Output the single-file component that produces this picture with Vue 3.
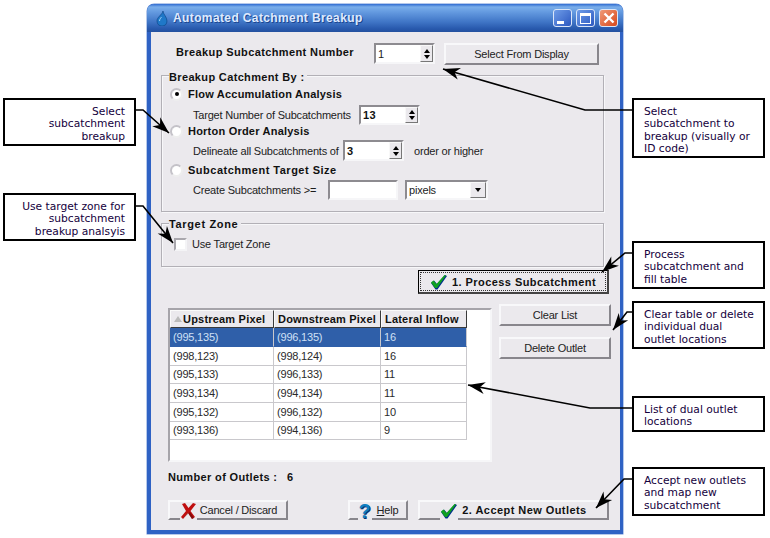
<script setup>
const rows = [
  ['(995,135)', '(996,135)', '16'],
  ['(998,123)', '(998,124)', '16'],
  ['(995,133)', '(996,133)', '11'],
  ['(993,134)', '(994,134)', '11'],
  ['(995,132)', '(996,132)', '10'],
  ['(993,136)', '(994,136)', '9'],
]
const leftNotes = [
  { lines: ['Select', 'subcatchment', 'breakup'], cls: 'n1' },
  { lines: ['Use target zone for', 'subcatchment', 'breakup analsyis'], cls: 'n2' },
]
const rightNotes = [
  { lines: ['Select', 'subcatchment to', 'breakup (visually or', 'ID code)'], cls: 'r1' },
  { lines: ['Process', 'subcatchment and', 'fill table'], cls: 'r2' },
  { lines: ['Clear table or delete', 'individual dual', 'outlet locations'], cls: 'r3' },
  { lines: ['List of dual outlet', 'locations'], cls: 'r4' },
  { lines: ['Accept new outlets', 'and map new', 'subcatchment'], cls: 'r5' },
]
const arrowData = [
  [[135, 110], [143, 110], [169, 133]],
  [[134, 206], [143, 206], [173, 243]],
  [[633, 110], [585, 110], [443, 69]],
  [[633, 253], [625, 253], [602, 272]],
  [[633, 312], [627, 312], [613, 330]],
  [[633, 408], [590, 408], [468, 385]],
  [[633, 479], [624, 479], [596, 508]],
]
function head(pts) {
  const [a, b] = pts.slice(-2)
  const d = Math.hypot(b[0] - a[0], b[1] - a[1])
  const ux = (b[0] - a[0]) / d
  const uy = (b[1] - a[1]) / d
  const at = (back, side) => `${b[0] - ux * back - uy * side},${b[1] - uy * back + ux * side}`
  return [at(0, 0), at(17, 6), at(12, 0), at(17, -6)].join(' ')
}
const arrows = arrowData.map((pts) => ({
  line: pts.map((p) => p.join(',')).join(' '),
  head: head(pts),
}))
</script>

<template>
  <div class="page">
    <aside class="notes left">
      <div v-for="n in leftNotes" :key="n.cls" class="note" :class="n.cls">
        <div v-for="l in n.lines" :key="l">{{ l }}</div>
      </div>
    </aside>

    <main class="window">
      <header class="titlebar">
        <svg class="drop" width="12" height="15" viewBox="0 0 12 15">
          <path d="M7 0C7 3 11 6 11 10C11 13 9 15 6 15C3 15 1 13 1 10C1 6 6 4 7 0Z" fill="#1f78c8" stroke="#0b3f80" stroke-width=".6" />
          <path d="M3.5 10C3.5 8 5 7 5.5 6" stroke="#9fd4f5" fill="none" />
        </svg>
        <span class="title">Automated Catchment Breakup</span>
        <div class="winbtns">
          <div class="wb"><span class="min"></span></div>
          <div class="wb"><span class="max"></span></div>
          <div class="wb close">
            <svg width="12" height="12" viewBox="0 0 12 12"><path d="M1.5 1.5L10.5 10.5M10.5 1.5L1.5 10.5" stroke="#fff" stroke-width="2.4" /></svg>
          </div>
        </div>
      </header>

      <section class="client">
        <div class="row1">
          <label class="bold r1label">Breakup Subcatchment Number</label>
          <div class="field w61 h21">
            <span class="val">1</span>
            <div class="spin"><i class="up"></i><i class="dn"></i></div>
          </div>
          <button class="btn sfd">Select From Display</button>
        </div>

        <div class="group g1">
          <div class="legend bold">Breakup Catchment By :</div>
          <div class="opt h18"><span class="radio on"></span><span class="bold ls23">Flow Accumulation Analysis</span></div>
          <div class="sub h20 mt2">
            <span class="sublabel w166">Target Number of Subcatchments</span>
            <div class="field w61 h20"><span class="val bold">13</span><div class="spin"><i class="up"></i><i class="dn"></i></div></div>
          </div>
          <div class="opt h12"><span class="radio"></span><span class="bold ls23">Horton Order Analysis</span></div>
          <div class="sub h21 mt3">
            <span class="sublabel w150">Delineate all Subcatchments of</span>
            <div class="field w61 h21"><span class="val bold">3</span><div class="spin"><i class="up"></i><i class="dn"></i></div></div>
            <span class="sublabel ooh">order or higher</span>
          </div>
          <div class="opt h18"><span class="radio"></span><span class="bold ls50">Subcatchment Target Size</span></div>
          <div class="sub h20 mt1">
            <span class="sublabel w135">Create Subcatchments &gt;=</span>
            <div class="field w70 h20"></div>
            <div class="field w83 h20 sel"><span class="val">pixels</span><div class="drop-btn"><i class="dn"></i></div></div>
          </div>
        </div>

        <div class="group g2">
          <div class="legend bold ls60">Target Zone</div>
          <div class="check"><span class="box"></span><span class="sublabel up1">Use Target Zone</span></div>
        </div>

        <button class="btn act process">
          <span class="focus">
            <svg width="18" height="16" viewBox="0 0 18 16"><path d="M1 9L4 6.5L7 10L15 1L17 2L7.5 15.5H5.5Z" fill="#00308c" /><path d="M1 8.5L3.5 6.5L6.5 10L14.5 1L16 1.5L7 14H5Z" fill="#0fa020" /></svg>
            <span class="bold lbl">1. Process Subcatchment</span>
          </span>
        </button>

        <div class="lower">
          <div class="grid">
            <div class="tr head">
              <div class="th"><i class="sort"></i>Upstream Pixel</div>
              <div class="th">Downstream Pixel</div>
              <div class="th">Lateral Inflow</div>
            </div>
            <div v-for="(r, i) in rows" :key="i" class="tr body" :class="{ selected: i === 0 }">
              <div v-for="c in r" :key="c" class="td">{{ c }}</div>
            </div>
          </div>
          <div class="side">
            <button class="btn sidebtn">Clear List</button>
            <button class="btn sidebtn">Delete Outlet</button>
          </div>
        </div>

        <div class="count bold"><span class="cl">Number of Outlets :</span><span>6</span></div>

        <div class="bottom">
          <button class="btn cancel">
            <span class="ic">
              <svg width="17" height="16" viewBox="0 0 17 16"><path d="M2 1L5 0L8.5 5L13 0L16 1L10.5 8L15 14L12 16L8 10L3 16L1 14L6 8Z" fill="#c01010" /><path d="M3 15.5L8 10L12 16L14 15L10 9" fill="#600808" opacity=".6" /></svg>
            </span>
            <span>Cancel / Discard</span>
          </button>
          <button class="btn help">
            <span class="ic q">?</span>
            <span class="helptxt"><u>H</u>elp</span>
          </button>
          <button class="btn accept">
            <span class="ic">
              <svg width="18" height="16" viewBox="0 0 18 16"><path d="M1 9L4 6.5L7 10L15 1L17 2L7.5 15.5H5.5Z" fill="#00308c" /><path d="M1 8.5L3.5 6.5L6.5 10L14.5 1L16 1.5L7 14H5Z" fill="#0fa020" /></svg>
            </span>
            <span class="bold lbl">2. Accept New Outlets</span>
          </button>
        </div>
      </section>
    </main>

    <aside class="notes right">
      <div v-for="n in rightNotes" :key="n.cls" class="note" :class="n.cls">
        <div v-for="l in n.lines" :key="l">{{ l }}</div>
      </div>
    </aside>

    <svg class="arrows" width="770" height="538" viewBox="0 0 770 538">
      <g v-for="(a, i) in arrows" :key="i">
        <polyline :points="a.line" fill="none" stroke="#000" stroke-width="1.6" />
        <polygon :points="a.head" fill="#000" />
      </g>
    </svg>
  </div>
</template>

<style>
html, body { margin: 0; background: #fff; }
</style>

<style scoped>
.page {
  position: relative;
  display: flex;
  width: 770px;
  height: 538px;
  overflow: hidden;
  background: #fff;
  font: 11px "Liberation Sans", Arial, sans-serif;
  letter-spacing: -.2px;
  color: #1c1c1c;
  white-space: nowrap;
}
.notes { width: 147px; flex: none; display: flex; flex-direction: column; }
.left { padding: 98px 0 0 3px; box-sizing: border-box; }
.right { padding: 98px 0 0 9px; box-sizing: border-box; }
.note {
  box-sizing: border-box;
  border: 2px solid #000;
  background: #fff;
  font: 10.7px/12.4px "DejaVu Sans", Verdana, sans-serif;
  letter-spacing: 0;
  color: #14003c;
  width: 133px;
}
.left .note { text-align: right; padding: 6px 9px 0 0; }
.right .note { padding: 6px 0 0 10px; }
.n1 { height: 48px; }
.n2 { height: 48px; margin-top: 47px; }
.r1 { height: 60px; }
.r2 { height: 48px; margin-top: 83px; }
.r3 { height: 48px; margin-top: 12px; }
.r4 { height: 36px; margin-top: 47px; }
.r5 { height: 49px; margin-top: 35px; }

.window {
  width: 476px;
  height: 530px;
  margin-top: 4px;
  flex: none;
  box-sizing: border-box;
  border: solid #2f62c4;
  border-width: 0 3px 4px 4px;
  border-radius: 7px 7px 0 0;
  background: #ebe9ed;
  display: flex;
  flex-direction: column;
  box-shadow: 0 0 0 .5px #6f93d8;
}
.titlebar {
  height: 28px;
  flex: none;
  margin: 0 -3px 0 -4px;
  border-radius: 7px 7px 0 0;
  background: linear-gradient(#2f6bd0 0, #7aaeea 3px, #649ae0 8px, #3f75c6 18px, #2758ac 25px, #24519f 28px);
  display: flex;
  align-items: center;
  padding: 0 5px 0 9px;
}
.drop { flex: none; margin-right: 5px; }
.title {
  font-weight: 700;
  font-size: 12px;
  letter-spacing: .38px;
  color: #dfeaff;
  text-shadow: 1px 1px 0 #1c4690;
  flex: 1;
}
.winbtns { display: flex; gap: 4px; }
.wb {
  box-sizing: border-box;
  width: 19px;
  height: 18px;
  border: 1px solid #dbe6f8;
  border-radius: 3px;
  background: linear-gradient(135deg, #6f9de8, #2c58c0);
  position: relative;
  display: flex;
  align-items: center;
  justify-content: center;
}
.wb.close { background: linear-gradient(135deg, #f09a78, #d8481c); }
.min { position: absolute; left: 3px; bottom: 2px; width: 7px; height: 3px; background: #fff; }
.max { width: 9px; height: 7px; border: 1px solid #fff; border-top-width: 3px; }

.client { display: flex; flex-direction: column; }
.bold { font-weight: 700; color: #111; letter-spacing: .35px; }
.bold.ls23 { letter-spacing: .22px; }
.bold.ls50 { letter-spacing: .5px; }
.bold.ls60 { letter-spacing: .65px; }

.row1 { display: flex; align-items: flex-start; height: 22px; margin-top: 11px; padding-left: 25px; }
.r1label { width: 198px; line-height: 18px; letter-spacing: .39px; }
.row1 .sfd { width: 155px; height: 22px; margin-left: 9px; }

.field {
  box-sizing: border-box;
  position: relative;
  flex: none;
  background: #fff;
  border: 2px solid;
  border-color: #8d8b90 #f6f6f8 #f6f6f8 #8d8b90;
  display: flex;
  align-items: center;
}
.val { padding-left: 2px; }
.w61 { width: 61px; }
.w70 { width: 70px; }
.w83 { width: 83px; margin-left: 7px; }
.h21 { height: 21px; }
.h20 { height: 20px; }
.spin {
  position: absolute;
  right: 0;
  top: 0;
  bottom: 0;
  width: 13px;
  background: #ebe9ed;
  border: 1px solid #f8f8f8;
  border-color: #f8f8f8 #777 #777 #f8f8f8;
  box-sizing: border-box;
  display: flex;
  flex-direction: column;
  align-items: center;
  justify-content: center;
  gap: 2px;
}
i.up, i.dn { display: block; width: 0; height: 0; border: 3.5px solid transparent; }
i.up { border-top: 0; border-bottom: 4px solid #000; }
i.dn { border-bottom: 0; border-top: 4px solid #000; }
.drop-btn {
  position: absolute;
  right: 0;
  top: 0;
  bottom: 0;
  width: 16px;
  box-sizing: border-box;
  background: #ebe9ed;
  border: 1px solid;
  border-color: #f8f8f8 #777 #777 #f8f8f8;
  display: flex;
  align-items: center;
  justify-content: center;
}

.group {
  position: relative;
  box-sizing: border-box;
  width: 443px;
  margin-left: 10px;
  border: 1px solid #b2b0b6;
  box-shadow: inset 1px 1px 0 #f7f7f9, 1px 1px 0 #f7f7f9;
}
.g1 { height: 137px; margin-top: 10px; padding-top: 9px; }
.g2 { height: 44px; margin-top: 11px; padding-top: 14px; }
.legend {
  position: absolute;
  left: 7px;
  top: -5px;
  line-height: 13px;
  padding-right: 3px;
  background: #ebe9ed;
}
.g2 .legend { top: -6px; }
.opt { display: flex; align-items: center; padding-left: 8px; }
.sub { display: flex; align-items: center; padding-left: 31px; }
.h18 { height: 18px; }
.h12 { height: 12px; }
.mt1 { margin-top: 1px; }
.mt2 { margin-top: 2px; }
.mt3 { margin-top: 3px; }
.sublabel { flex: none; }
.up1 { margin-top: -2px; }
.w166 { width: 166px; }
.w150 { width: 150px; }
.w135 { width: 135px; }
.ooh { margin-left: 10px; }
.radio {
  box-sizing: border-box;
  flex: none;
  width: 13px;
  height: 13px;
  border-radius: 50%;
  background: #fff;
  border: 2px solid #c4c2c8;
  border-right-color: #eee;
  border-bottom-color: #eee;
  margin-right: 5px;
  position: relative;
}
.radio.on::after {
  content: "";
  position: absolute;
  left: 2.5px;
  top: 2.5px;
  width: 4px;
  height: 4px;
  border-radius: 50%;
  background: #000;
}
.check { display: flex; align-items: center; padding-left: 12px; height: 13px; }
.box {
  box-sizing: border-box;
  width: 13px;
  height: 13px;
  background: #fff;
  border: 2px solid;
  border-color: #a9a7ad #f4f4f6 #f4f4f6 #a9a7ad;
  margin-right: 5px;
}

.btn {
  box-sizing: border-box;
  padding: 0;
  margin: 0;
  background: #ebe9ed;
  font: 11px "Liberation Sans", Arial, sans-serif;
  letter-spacing: -.2px;
  color: #222;
  border: 2px solid;
  border-color: #f8f8fa #88868c #88868c #f8f8fa;
  display: flex;
  align-items: center;
  justify-content: center;
}
.btn.process {
  width: 191px;
  height: 24px;
  margin: 3px 0 0 267px;
  border: 1px solid #000;
  border-bottom: 2px solid #444;
  border-right: 2px solid #444;
  padding: 1px;
}
.focus {
  flex: 1;
  align-self: stretch;
  display: flex;
  align-items: center;
  justify-content: center;
  gap: 4px;
  padding-left: 0;
  border: 1px dotted #333;
}
.lower { display: flex; height: 158px; margin-top: 10px; padding-left: 17px; gap: 7px; }
.grid {
  box-sizing: border-box;
  width: 324px;
  height: 154px;
  margin-top: 4px;
  background: #fff;
  border: 2px solid;
  border-color: #a6a4aa #f6f6f8 #f6f6f8 #a6a4aa;
}
.tr { display: grid; grid-template-columns: 104px 107px 86px; width: 297px; }
.head { height: 18px; }
.th {
  box-sizing: border-box;
  background: #ebe9ed;
  font-weight: 700;
  color: #111;
  letter-spacing: .2px;
  border: 1px solid;
  border-color: #fafafa #3a3a3a #3a3a3a #fafafa;
  line-height: 15px;
  padding-left: 3px;
  overflow: hidden;
  display: flex;
  align-items: center;
}
.sort {
  width: 0;
  height: 0;
  border: 4px solid transparent;
  border-top: 0;
  border-bottom: 6px solid #bbb;
  margin: 0 1px 0 0;
}
.body { height: 18.67px; }
.td {
  box-sizing: border-box;
  padding-left: 3px;
  line-height: 18px;
  border-right: 1px solid #c9c8cc;
  border-bottom: 1px solid #c9c8cc;
  color: #2a2a2a;
}
.selected .td { background: #2f5fa9; color: #cfe0f6; border-color: #2f5fa9 #c9c8cc #2f5fa9 #2f5fa9; }
.side { display: flex; flex-direction: column; gap: 11px; }
.sidebtn { width: 112px; height: 22px; }
.count { display: flex; height: 14px; line-height: 14px; margin-top: 8px; padding-left: 17px; }
.cl { width: 119px; }
.bottom { display: flex; margin-top: 16px; padding-left: 17px; }
.btn.cancel { width: 120px; height: 20px; gap: 3px; padding-left: 1px; }
.btn.help { width: 60px; height: 20px; margin-left: 60px; gap: 5px; }
.btn.accept { width: 191px; height: 20px; margin-left: 10px; gap: 4px; padding-left: 0; }
.ic { display: flex; align-items: center; justify-content: center; height: 16px; background: #ebe9ed; margin-bottom: -3px; padding-bottom: 2px; }
.q { font: 700 20px/16px "Liberation Sans", Arial, sans-serif; color: #0f7fc0; text-shadow: 1px 1px 0 #0a2f70; width: 14px; }
.bold.lbl { letter-spacing: .44px; }
.arrows { position: absolute; left: 0; top: 0; pointer-events: none; }
</style>
